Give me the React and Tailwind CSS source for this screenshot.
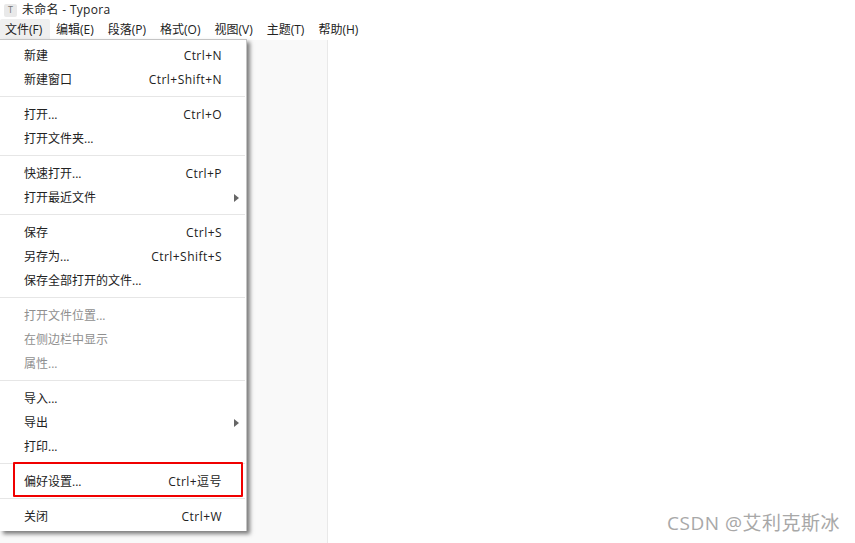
import { Fragment } from 'react';

const menus = ['编辑(E)', '段落(P)', '格式(O)', '视图(V)', '主题(T)', '帮助(H)'];

const groups = [
  [
    { label: '新建', keys: 'Ctrl+N' },
    { label: '新建窗口', keys: 'Ctrl+Shift+N' },
  ],
  [
    { label: '打开...', keys: 'Ctrl+O' },
    { label: '打开文件夹...' },
  ],
  [
    { label: '快速打开...', keys: 'Ctrl+P' },
    { label: '打开最近文件', arrow: true },
  ],
  [
    { label: '保存', keys: 'Ctrl+S' },
    { label: '另存为...', keys: 'Ctrl+Shift+S' },
    { label: '保存全部打开的文件...' },
  ],
  [
    { label: '打开文件位置...', disabled: true },
    { label: '在侧边栏中显示', disabled: true },
    { label: '属性...', disabled: true },
  ],
  [
    { label: '导入...' },
    { label: '导出', arrow: true },
    { label: '打印...' },
  ],
  [{ label: '偏好设置...', keys: 'Ctrl+逗号' }],
  [{ label: '关闭', keys: 'Ctrl+W' }],
];

const MenuItem = ({ item }) => (
  <div
    className={`flex h-6 items-center justify-between pl-6 pr-6 pt-[2px] ${
      item.disabled ? 'text-[#8f8f8f]' : 'text-[#222222]'
    }`}
  >
    <span>{item.label}</span>
    {item.keys && <span className="tracking-[0.45px]">{item.keys}</span>}
    {item.arrow && (
      <span className="-mr-[17px] h-0 w-0 border-y-[4px] border-l-[5px] border-y-transparent border-l-[#666666]" />
    )}
  </div>
);

const App = () => {
  return (
    <div className="relative flex h-[543px] w-[855px] flex-col overflow-hidden bg-white font-['Open_Sans','Noto_Sans_CJK_SC',sans-serif] text-[12px] text-[#222222]">
      <header className="flex h-[19px] items-center gap-[5px] pl-[4px] pt-[1px]">
        <span className="flex h-[13px] w-[13px] items-center justify-center rounded-[2px] bg-[#e9e9e9] text-[9px] text-[#777777]">
          T
        </span>
        <span className="tracking-[0.3px]">未命名 - Typora</span>
      </header>

      <nav className="flex h-[21px] items-center">
        <span className="flex h-[21px] w-[50px] items-center rounded-t-[2px] bg-[#efefef] pl-[5px]">
          文件(F)
        </span>
        {menus.map((name) => (
          <span key={name} className="flex h-[21px] items-center pl-[6px] pr-[8px]">
            {name}
          </span>
        ))}
      </nav>

      <main className="flex flex-1">
        <div className="w-[328px] border-r border-[#e9e9e9] bg-[#f9f9f9]" />
        <div className="flex-1 bg-white" />
      </main>

      <div className="absolute left-0 top-[39px] w-[247px] border-r border-t border-[#c4c4c4] bg-white pb-[3px] pt-[3px] shadow-[3px_3px_4px_rgba(0,0,0,0.5)]">
        {groups.map((group, i) => (
          <Fragment key={i}>
            {i > 0 && (
              <div className="flex h-[11px] items-center">
                <div className="h-px w-[245px] bg-[#e6e6e6]" />
              </div>
            )}
            {group.map((item) => (
              <MenuItem key={item.label} item={item} />
            ))}
          </Fragment>
        ))}
      </div>

      <div className="absolute left-[13px] top-[462px] h-[35px] w-[230px] rounded-[1px] border-2 border-[#f00000]" />

      <div className="absolute bottom-[8px] right-[15px] text-[19px] leading-[24px] tracking-[0.5px] text-[#a8a8a8]">
        CSDN @艾利克斯冰
      </div>
    </div>
  );
};

export default App;
